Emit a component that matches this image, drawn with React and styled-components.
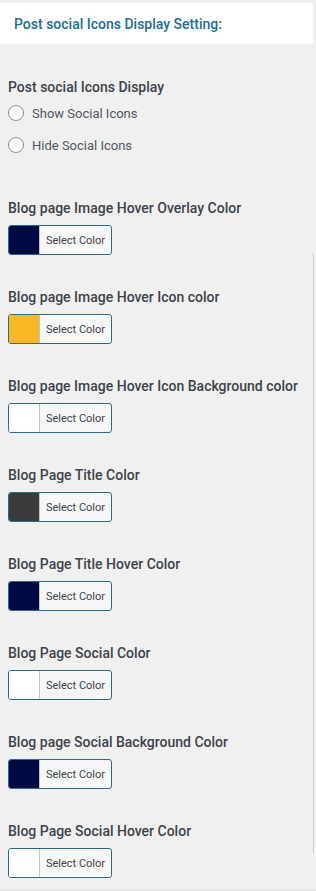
import styled, { createGlobalStyle } from "styled-components";

const Global = createGlobalStyle`
  html, body {
    margin: 0;
    padding: 0;
    background: #f0f0f1;
    font-family: Roboto, "Noto Sans", "Liberation Sans", sans-serif;
  }
`;

const Page = styled.div`
  position: relative;
  width: 316px;
  height: 891px;
  padding-top: 3px;
  box-sizing: border-box;
  background: #f0f0f1;
  border-bottom: 1px solid #dcdcde;

  &::after {
    content: "";
    position: absolute;
    right: 2px;
    top: 253px;
    height: 600px;
    width: 1px;
    background: #c9c9cc;
  }
`;

const Header = styled.div`
  height: 41px;
  margin-right: 3px;
  background: #fff;
  display: flex;
  align-items: center;
  padding-left: 14px;
  font-size: 14px;
  font-weight: 500;
  color: #1a6f95;
`;

const Body = styled.div`
  padding: 0 8px;
`;

const Label = styled.div`
  font-size: 14px;
  line-height: 18px;
  font-weight: 500;
  color: #3c434a;
  margin-top: ${(p) => p.top}px;
`;

const RadioRow = styled.label`
  display: flex;
  align-items: center;
  gap: 8px;
  height: 20px;
  margin-top: ${(p) => p.top}px;
  font-size: 13px;
  color: #50575e;
`;

const Circle = styled.span`
  width: 14px;
  height: 14px;
  border: 1px solid #8c8f94;
  border-radius: 50%;
  background: #fff;
  box-sizing: content-box;
`;

const ColorButton = styled.div`
  margin-top: 8px;
  display: flex;
  width: 102px;
  height: 28px;
  border: 1px solid #2d6a8a;
  border-radius: 3px;
  overflow: hidden;
  background: #f6f7f7;
`;

const Swatch = styled.span`
  width: 30px;
  background: ${(p) => p.color};
  border-right: 1px solid #c3c4c7;
`;

const ButtonText = styled.span`
  flex: 1;
  display: flex;
  align-items: center;
  justify-content: center;
  font-size: 11px;
  color: #3c434a;
`;

const colors = [
  ["Blog page Image Hover Overlay Color", "#020a45"],
  ["Blog page Image Hover Icon color", "#f8b824"],
  ["Blog page Image Hover Icon Background color", "#ffffff"],
  ["Blog Page Title Color", "#3b3b3b"],
  ["Blog Page Title Hover Color", "#020a45"],
  ["Blog Page Social Color", "#ffffff"],
  ["Blog page Social Background Color", "#020a45"],
  ["Blog Page Social Hover Color", "#ffffff"],
];

export default function App() {
  return (
    <>
      <Global />
      <Page>
        <Header>Post social Icons Display Setting:</Header>
        <Body>
          <Label top={34}>Post social Icons Display</Label>
          <RadioRow top={7}>
            <Circle />
            Show Social Icons
          </RadioRow>
          <RadioRow top={12}>
            <Circle />
            Hide Social Icons
          </RadioRow>
          {colors.map(([label, color], i) => (
            <div key={label}>
              <Label top={i === 0 ? 44 : 33}>{label}</Label>
              <ColorButton>
                <Swatch color={color} />
                <ButtonText>Select Color</ButtonText>
              </ColorButton>
            </div>
          ))}
        </Body>
      </Page>
    </>
  );
}
